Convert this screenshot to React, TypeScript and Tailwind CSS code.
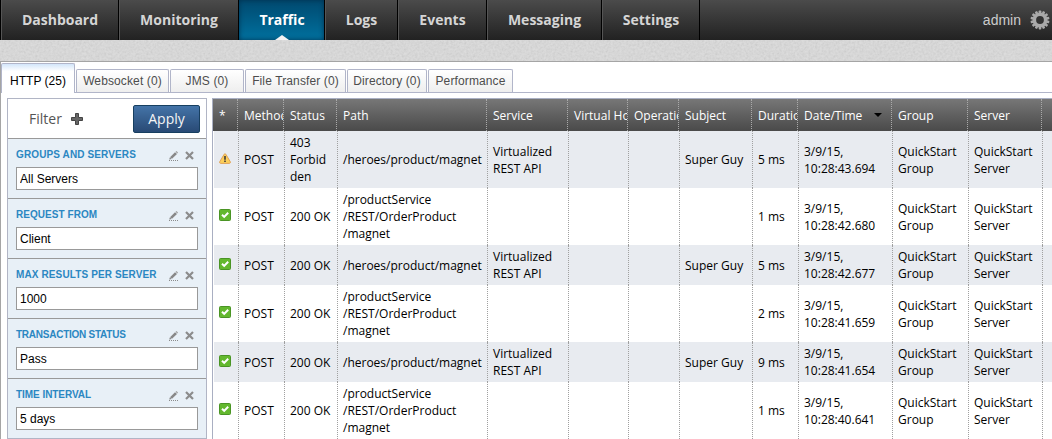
import clsx from 'clsx';

const navItems = [
  { label: 'Dashboard', width: 'w-[118px]' },
  { label: 'Monitoring', width: 'w-[120px]' },
  { label: 'Traffic', width: 'w-[86px]', active: true },
  { label: 'Logs', width: 'w-[73px]' },
  { label: 'Events', width: 'w-[89px]' },
  { label: 'Messaging', width: 'w-[115px]' },
  { label: 'Settings', width: 'w-[98px]' },
];

const tabs = [
  { label: 'HTTP (25)', width: 'w-[74px]', active: true },
  { label: 'Websocket (0)', width: 'w-[93px]' },
  { label: 'JMS (0)', width: 'w-[74px]' },
  { label: 'File Transfer (0)', width: 'w-[101px]' },
  { label: 'Directory (0)', width: 'w-[80px]' },
  { label: 'Performance', width: 'w-[85px]' },
];

const filters = [
  { label: 'GROUPS AND SERVERS', value: 'All Servers', tracking: 'tracking-[0.12px]' },
  { label: 'REQUEST FROM', value: 'Client', tracking: 'tracking-[0.05px]' },
  { label: 'MAX RESULTS PER SERVER', value: '1000', tracking: 'tracking-[0.12px]' },
  { label: 'TRANSACTION STATUS', value: 'Pass', tracking: 'tracking-[-0.25px]' },
  { label: 'TIME INTERVAL', value: '5 days', tracking: 'tracking-[-0.05px]' },
];

const columns = ['*', 'Method', 'Status', 'Path', 'Service', 'Virtual Host', 'Operation', 'Subject', 'Duration', 'Date/Time', 'Group', 'Server'];

const gridCols = 'grid grid-cols-[25px_46px_53px_150px_81px_60px_51px_73px_46px_94px_76px_74px_1fr]';

const rest = { path: ['/heroes/product/magnet'], service: ['Virtualized', 'REST API'], subject: 'Super Guy' };
const order = { path: ['/productService', '/REST/OrderProduct', '/magnet'], service: [], subject: '' };

const rows = [
  { ...rest, status: ['403', 'Forbid', 'den'], duration: '5 ms', time: '10:28:43.694' },
  { ...order, status: ['200 OK'], duration: '1 ms', time: '10:28:42.680' },
  { ...rest, status: ['200 OK'], duration: '5 ms', time: '10:28:42.677' },
  { ...order, status: ['200 OK'], duration: '2 ms', time: '10:28:41.659' },
  { ...rest, status: ['200 OK'], duration: '9 ms', time: '10:28:41.654' },
  { ...order, status: ['200 OK'], duration: '1 ms', time: '10:28:40.641' },
];

const GearIcon = () => (
  <svg width="20" height="20" viewBox="0 0 20 20">
    <g fill="#a9a9a9">
      {Array.from({ length: 7 }).map((_, i) => (
        <rect key={i} x="8.7" y="0.5" width="2.6" height="19" rx="0.7" transform={`rotate(${(i * 180) / 7} 10 10)`} />
      ))}
      <circle cx="10" cy="10" r="7.5" />
    </g>
    <circle cx="10" cy="10" r="3.9" fill="#343434" />
  </svg>
);

const PlusIcon = () => (
  <svg width="12" height="12" viewBox="0 0 12 12">
    <path d="M4.500.5h3v4h4v3h-4v4h-3v-4h-4v-3h4z" fill="#666" stroke="#444" />
  </svg>
);

const PencilIcon = () => (
  <svg width="10" height="10" viewBox="0 0 10 10">
    <path d="M1 6.200 6 1.300 8 3 3 7.800z" fill="#888" />
    <path d="M6.600.8 7.400 0 9 1.500l-.7.9z" fill="#999" />
    <path d="M.8 6.600 2.600 8 .3 8.600z" fill="#777" />
    <path d="M0 9.500h9" stroke="#8b8b8b" strokeDasharray="1 1" />
  </svg>
);

const CloseIcon = () => (
  <svg width="9" height="9" viewBox="0 0 9 9">
    <path d="m1 1 7 7M8 1 1 8" stroke="#8c8c8c" strokeWidth="2.2" />
  </svg>
);

const WarningIcon = () => (
  <svg width="12" height="11" viewBox="0 0 12 11">
    <path d="M5.200 1.200Q6 .2 6.800 1.200l4.500 7.600q.4 1.400-.8 1.600h-9Q.3 10.200.7 8.800z" fill="#fccf5a" stroke="#e0a35a" />
    <path d="M6 3v3.800" stroke="#47413a" strokeWidth="1.7" />
    <path d="M6 7.600v1.500" stroke="#47413a" strokeWidth="1.7" />
  </svg>
);

const CheckIcon = () => (
  <svg width="12" height="12" viewBox="0 0 12 12">
    <rect x=".5" y=".5" width="11" height="11" rx="1" fill="#63b82e" stroke="#4a9425" />
    <path d="m3 5.700 2.200 2.200 4-4.200" fill="none" stroke="#fff" strokeWidth="2" />
  </svg>
);

const Cell = ({ lines = [], className = '' }: { lines?: string[]; className?: string }) => (
  <div
    className={clsx(
      'flex min-w-0 flex-col justify-center overflow-hidden border-r border-dotted border-[#a0a0a0] pl-[5px] whitespace-nowrap',
      className,
    )}
  >
    {lines.map((line) => (
      <span key={line}>{line}</span>
    ))}
  </div>
);

const TopNav = () => (
  <nav className="flex h-10 shrink-0 bg-linear-to-b from-[#4b4b4b] to-[#222] font-bold text-[#d5d5d5]">
    <div className="w-px bg-black" />
    {navItems.map(({ label, width, active }) => (
      <div
        key={label}
        className={clsx(
          'relative flex shrink-0 justify-center border-r border-black pt-[10px] text-[14px] leading-5',
          width,
          active
            ? 'bg-linear-to-b from-[#00496f] to-[#00719f] pl-px text-white shadow-[inset_0_0_5px_#00324f]'
            : 'border-l border-l-[#555]',
        )}
      >
        {label}
        {active && (
          <svg className="absolute bottom-0 left-[36px]" width="14" height="5" viewBox="0 0 14 5">
            <path d="M0 5 7 0l7 5z" fill="#f3f3f3" />
          </svg>
        )}
      </div>
    ))}
    <div className="ml-auto flex items-center gap-[9px] pr-[2px] font-['Liberation_Sans',sans-serif] text-[14px] font-normal text-[#ccc]">
      admin
      <GearIcon />
    </div>
  </nav>
);

const Texture = () => (
  <svg className="block h-[21px] w-full shrink-0 bg-[#cecece]">
    <filter id="grain">
      <feTurbulence type="fractalNoise" baseFrequency="0.45" numOctaves="2" />
      <feColorMatrix values="0.13 0 0 0 0.745  0.13 0 0 0 0.745  0.13 0 0 0 0.745  0 0 0 0 1" colorInterpolationFilters="sRGB" />
    </filter>
    <rect width="100%" height="100%" filter="url(#grain)" />
  </svg>
);

const Sidebar = () => (
  <aside className="w-[200px] shrink-0 border border-[#b1b5c5] font-['Liberation_Sans',sans-serif]">
    <div className="flex h-[39px] items-center pr-[6px] pl-[21px] font-['Open_Sans',sans-serif] text-[14px]">
      <span className="text-[#555]">Filter</span>
      <span className="ml-[9px]">
        <PlusIcon />
      </span>
      <button className="ml-auto h-7 w-[67px] rounded-[2px] border border-[#173f60] bg-linear-to-b from-[#4474a8] to-[#294a75] text-[#f5f5f5]">
        Apply
      </button>
    </div>
    {filters.map(({ label, value, tracking }) => (
      <div key={label} className="h-[60px] border-t border-[#999] bg-[#e8f0f7] px-2 pt-[9px]">
        <div className="flex h-[14px] items-center">
          <span className={clsx('text-[10px] leading-[14px] font-bold whitespace-nowrap text-[#2b87c2]', tracking)}>{label}</span>
          <span className="ml-auto pt-px">
            <PencilIcon />
          </span>
          <span className="mr-[4px] ml-[6px]">
            <CloseIcon />
          </span>
        </div>
        <input
          readOnly
          value={value}
          className="mt-[5px] block h-[23px] w-[182px] border border-[#999] bg-white px-[3px] text-[12px] text-black"
        />
      </div>
    ))}
  </aside>
);

const TrafficTable = () => (
  <section className="ml-[5px] min-w-0 flex-1 border-t border-l border-[#a9afc2] text-[12px] leading-[17px] text-black">
    <div className={clsx(gridCols, 'h-8 bg-linear-to-b from-[#777] to-[#4a4a4a] text-white')}>
      {columns.map((name) => (
        <div key={name} className="flex min-w-0 items-center overflow-hidden border-r border-dotted border-[#aaa] pl-[6px] whitespace-nowrap">
          {name}
          {name === 'Date/Time' && (
            <span className="ml-[12px] border-x-4 border-t-4 border-x-transparent border-t-black" />
          )}
        </div>
      ))}
    </div>
    <div className="pl-px">
      {rows.map((row, i) => (
        <div key={row.time} className={clsx(gridCols, row.path.length + row.status.length > 2 ? 'h-[57px]' : 'h-10', i % 2 === 0 && 'bg-[#e8ebf0]')}>
          <div className="flex items-center border-r border-dotted border-[#a0a0a0] pb-[3px] pl-[5px]">
            {i === 0 ? <WarningIcon /> : <CheckIcon />}
          </div>
          <Cell lines={['POST']} />
          <Cell lines={row.status} />
          <Cell lines={row.path} />
          <Cell lines={row.service} />
          <Cell />
          <Cell />
          <Cell lines={[row.subject]} />
          <Cell lines={[row.duration]} />
          <Cell lines={['3/9/15,', row.time]} />
          <Cell lines={['QuickStart', 'Group']} />
          <Cell lines={['QuickStart', 'Server']} />
        </div>
      ))}
    </div>
  </section>
);

export default function App() {
  return (
    <div className="flex h-[439px] w-[1052px] flex-col overflow-hidden bg-white font-['Open_Sans',sans-serif]">
      <TopNav />
      <Texture />
      <main className="flex min-h-0 flex-1 flex-col border-t border-l border-[#a5a5a5]">
        <div className="flex h-[31px] shrink-0 items-end gap-px border-b border-[#b1b5c9] font-['Liberation_Sans',sans-serif] text-[12px]">
          {tabs.map(({ label, width, active }) => (
            <div
              key={label}
              className={clsx(
                'flex shrink-0 items-center justify-center rounded-t-[2px] border border-b-0 border-[#b1b5c9]',
                width,
                active
                  ? '-mb-px h-[30px] bg-linear-to-b from-[#d3e6fa] to-white to-25% pt-[4px] text-black'
                  : 'h-[23px] bg-linear-to-b from-white to-[#eee] tracking-[0.12px] text-[#4d4d4d]',
              )}
            >
              {label}
            </div>
          ))}
        </div>
        <div className="flex min-h-0 flex-1 pt-[5px] pl-[6px]">
          <Sidebar />
          <TrafficTable />
        </div>
      </main>
    </div>
  );
}
